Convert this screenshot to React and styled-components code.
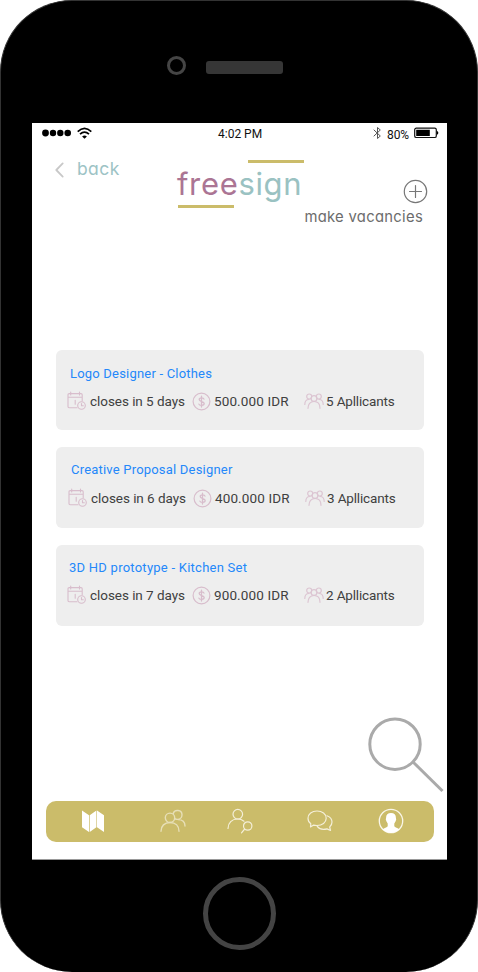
import React from "react";
import styled, { createGlobalStyle } from "styled-components";

const GlobalStyle = createGlobalStyle`
  * { box-sizing: border-box; }
  html, body { margin: 0; background: #fff; }
  svg { display: block; flex: none; }
  button { border: 0; padding: 0; background: none; font: inherit; cursor: pointer; }
`;

const Phone = styled.div`
  width: 478px;
  height: 972px;
  display: flex;
  flex-direction: column;
  background: #000;
  border: 1px solid #333;
  border-width: 1px 1px 0;
  border-radius: 72px;
  font-family: Roboto, "Liberation Sans", sans-serif;
  overflow: hidden;
`;
const TopBezel = styled.div`
  height: 122px;
  display: flex;
  align-items: flex-start;
  padding: 55px 0 0 166px;
  gap: 20px;
`;
const Camera = styled.div`
  width: 19px;
  height: 19px;
  border: 3px solid #454545;
  border-radius: 50%;
`;
const Speaker = styled.div`
  width: 77px;
  height: 13px;
  margin-top: 4.5px;
  background: #363636;
  border-radius: 3px;
`;
const Screen = styled.main`
  width: 415px;
  height: 737px;
  margin-left: 31px;
  display: flex;
  flex-direction: column;
  background: #fff;
  border-bottom: 1px solid #999;
`;
const BottomBezel = styled.div`
  flex: 1;
  display: flex;
  justify-content: center;
  padding-top: 17px;
`;
const HomeButton = styled.button`
  width: 73px;
  height: 73px;
  border: 5px solid #444;
  border-radius: 50%;
`;

const StatusBar = styled.div`
  height: 22px;
  display: grid;
  grid-template-columns: 176px 1fr auto;
  padding: 0 8px 0 10px;
  font-size: 12px;
  line-height: 22px;
  color: #111;
`;
const Signal = styled.div`
  display: flex;
  padding-top: 4px;
  gap: 6px;
`;
const Time = styled.span`
  white-space: nowrap;
`;
const Power = styled.div`
  display: flex;
  gap: 5px;
  padding-top: 1px;
  svg { margin-top: 2px; }
`;
const Percent = styled.span`
  width: 22px;
  letter-spacing: -0.1px;
`;

const Header = styled.header`
  height: 205px;
  display: grid;
  grid-template-columns: 122px 126px 1fr;
  padding: 15px 24px 0 24px;
  font-family: Inter, Lato, sans-serif;
  font-feature-settings: "cv11" 1;
`;
const Back = styled.button`
  height: 20px;
  margin-top: -1px;
  display: flex;
  align-items: center;
  gap: 13px;
  font-size: 17.5px;
  line-height: 20px;
  letter-spacing: 0.4px;
  color: #9dc3c5;
  svg { margin: 2px 0 0 -1px; }
`;
const Logo = styled.div`
  height: 48px;
  display: flex;
  flex-direction: column;
`;
const Bar = styled.div`
  width: 56px;
  height: 3px;
  background: #cbbc6a;
  align-self: ${(p) => (p.$end ? "flex-end" : "flex-start")};
`;
const Wordmark = styled.div`
  height: 42px;
  line-height: 42px;
  font-size: 31px;
  letter-spacing: 0.65px;
  text-indent: -1px;
  white-space: nowrap;
  color: #9ac2c2;
`;
const Free = styled.span`
  color: #ab7594;
`;
const Make = styled.button`
  display: flex;
  flex-direction: column;
  align-items: flex-end;
  height: 72px;
  padding-top: 19px;
  white-space: nowrap;
  font-size: 14.8px;
  letter-spacing: 0.3px;
  line-height: 22px;
  color: #6c6c6c;
  svg { margin: 0 -5px 2px 0; }
`;

const Cards = styled.section`
  height: 276px;
  display: flex;
  flex-direction: column;
  justify-content: space-between;
  padding: 0 23px 0 24px;
`;
const Card = styled.article`
  height: ${(p) => p.$height}px;
  padding: ${(p) => p.$top}px 0 0 ${(p) => 11 + p.$shift}px;
  background: #eee;
  border-radius: 6px;
`;
const Title = styled.h2`
  margin: 0 0 0 ${(p) => p.$indent}px;
  height: 18px;
  line-height: 18px;
  font-size: 13px;
  font-weight: 400;
  letter-spacing: ${(p) => p.$spacing}px;
  color: #2488fa;
`;
const Facts = styled.div`
  display: grid;
  grid-template-columns: 125px 112px 1fr;
  margin-top: ${(p) => p.$gap}px;
  height: 20px;
`;
const Fact = styled.div`
  display: flex;
  align-items: center;
  gap: ${(p) => p.$gap}px;
  color: #404040;
  font-size: 13.5px;
  line-height: 20px;
  white-space: nowrap;
  letter-spacing: ${(p) => p.$spacing}px;
`;

const SearchButton = styled.button`
  width: 78px;
  height: 77px;
  margin: 91px 2px 0 auto;
`;
const Nav = styled.nav`
  height: 41px;
  margin: 7px 13px 0 14px;
  padding-bottom: 1px;
  display: grid;
  grid-template-columns: 93px 67px 67px 93px 50px;
  align-items: center;
  background: #cbbc6a;
  border-radius: 10px;
`;
const NavItem = styled.button`
  display: flex;
  justify-content: center;
`;

const stroke = { fill: "none", strokeLinecap: "round", strokeLinejoin: "round" };

const SignalIcon = () => (
  <svg width="29" height="12" viewBox="0 0 29 12" fill="#000">
    <circle cx="3.5" cy="6" r="3.4" /><circle cx="11" cy="6" r="3.2" />
    <circle cx="18.3" cy="6" r="3.2" /><circle cx="25.7" cy="6" r="3.3" />
  </svg>
);
const WifiIcon = () => (
  <svg width="15" height="13" viewBox="0 0 15 13" {...stroke} strokeLinecap="butt" stroke="#000" strokeWidth="1.7">
    <path d="M.7 4.7Q7.5-1.9 14.3 4.7M3 7.2q4.5-4.2 9 0" />
    <path d="M5.1 9.4q2.4-2 4.8 0L7.5 11.8z" fill="#000" stroke="none" />
  </svg>
);
const BluetoothIcon = () => (
  <svg width="9" height="14" viewBox="0 0 9 14" {...stroke} stroke="#555">
    <path d="M1 4l6.3 6L4.5 12.5v-11L7.3 4 1 10" />
  </svg>
);
const BatteryIcon = () => (
  <svg width="25" height="14" viewBox="0 0 25 14">
    <rect x=".7" y="2.2" width="21.6" height="9.3" rx="1.6" fill="none" stroke="#111" strokeWidth="1.2" />
    <path d="M2.2 3.8h13.6v6.2H2.2zM22.8 5c2 .4 2 3.4 0 3.8z" fill="#000" />
  </svg>
);
const BackIcon = () => (
  <svg width="9" height="16" viewBox="0 0 9 16" {...stroke} stroke="#c8c8c8" strokeWidth="1.8">
    <path d="M7.7 1.4L1.3 8l6.4 6.6" />
  </svg>
);
const PlusIcon = () => (
  <svg width="25" height="25" viewBox="0 0 25 25" {...stroke} stroke="#777" strokeWidth="1.2">
    <circle cx="12.5" cy="12.5" r="11.2" /><path d="M12.5 6.5v12M6.5 12.5h12" />
  </svg>
);
const CalendarIcon = () => (
  <svg width="19" height="20" viewBox="0 0 19 20" {...stroke} stroke="#d8bdcc" strokeWidth="1.1">
    <path d="M10 16.7H2.2Q1 16.7 1 15.5V3.8Q1 2.6 2.2 2.6H14q1.2 0 1.2 1.2v6M1 6.2h14.2M3.7 1v3M12.5 1v3M8.2 9.2v4" />
    <circle cx="14.5" cy="14.5" r="3.8" /><path d="M14.5 12.5v2.2h1.8" />
  </svg>
);
const CoinIcon = () => (
  <svg width="19" height="20" viewBox="0 0 19 20" {...stroke} stroke="#d8bdcc" strokeWidth="1.2">
    <circle cx="9.5" cy="10.5" r="8.4" />
    <path d="M12 8.1C11.5 6.5 7.2 6.5 7.2 8.6c0 2.5 5 1.4 5 4 0 2.4-4.7 2.4-5.3.5M9.5 5.2v10.8" strokeWidth="1.3" />
  </svg>
);
const GroupIcon = () => (
  <svg width="20" height="20" viewBox="0 0 20 20" {...stroke} stroke="#dcc5d2" strokeWidth="1.2">
    <circle cx="5.2" cy="5.5" r="2.5" /><circle cx="10" cy="7.5" r="2.9" /><circle cx="14.8" cy="5.5" r="2.5" />
    <path d="M.8 13.5c0-3 1.6-5 4.2-5M19.2 13.5c0-3-1.6-5-4.2-5M4 17.3c0-4 2.2-6.8 6-6.8s6 2.8 6 6.8" />
  </svg>
);
const SearchIcon = () => (
  <svg width="78" height="77" viewBox="0 0 78 77" fill="none" stroke="#aaa" strokeWidth="3">
    <circle cx="28" cy="27.2" r="25.2" /><path d="M46 45l29.5 29" />
  </svg>
);
const MapIcon = () => (
  <svg width="24" height="24" viewBox="0 0 24 24" fill="#fff">
    <path d="M1 1.5l7 4.7V23L1 18.3zM8.7 6.2L15.4 1.5v16.8L8.7 23zM16 1.5L23 6.2V23l-7-4.7z" />
  </svg>
);
const PeopleIcon = () => (
  <svg width="26" height="24" viewBox="0 0 26 24" {...stroke} stroke="#e7dfb7" strokeWidth="1.4">
    <circle cx="10" cy="8.8" r="4.7" /><path d="M1 22.3c0-5.4 3.6-8.8 9-8.8s9 3.4 9 8.8" />
    <path d="M13.2 4.5C14.4 0 22 .7 22 5.8c0 2.7-2 4.6-4.5 4.6-1 0-2-.3-2.7-.8M18 10.6c4.4 0 7 2.3 7 6.4" />
  </svg>
);
const FindPersonIcon = () => (
  <svg width="26" height="26" viewBox="0 0 26 26" {...stroke} stroke="#f4efd9" strokeWidth="1.2">
    <circle cx="10.8" cy="6.2" r="4.8" /><path d="M1 20.5c0-5.7 4-9.5 9.5-9.5 2.7 0 4.8.8 6.5 2.2" />
    <circle cx="20.7" cy="18" r="4.2" /><path d="M17.7 21L14.5 24.8" />
  </svg>
);
const ChatIcon = () => (
  <svg width="26" height="22" viewBox="0 0 26 22" {...stroke} stroke="#f4efd9" strokeWidth="1.2">
    <path d="M10 1C5 1 1 4 1 8.3c0 2.3 1 4.2 2.8 5.5L3.5 17l3.1-1.9c1 .3 2.1.4 3.4.4 5.2 0 9.2-3 9.2-7.2S15.2 1 10 1z" />
    <path d="M20 5.8c3 1.2 5 3.6 5 6.3 0 2-.8 3.7-2.3 4.9l.8 3.5-3.5-1.6c-3.8 1-7.9-.1-9.8-2.5" />
  </svg>
);
const ProfileIcon = () => (
  <svg width="26" height="26" viewBox="0 0 26 26">
    <circle cx="13" cy="13" r="11.7" fill="none" stroke="#f9f6e8" strokeWidth="1.3" />
    <path d="M13 5c3.2 0 5 1.8 4.9 4.8l.3 1.6-.7 2-1.2 2.2v2.7c.4 1.2 3.7 1.8 5.2 3.3-5 4.4-12 4.400-17 0 1.500-1.500 4.800-2.100 5.200-3.300v-2.700l-1.200-2.200-.7-2 .3-1.600C8 6.800 9.800 5 13 5z" fill="#fff" />
  </svg>
);

const vacancies = [
  { title: "Logo Designer - Clothes", days: 5, pay: "500.000", applicants: 5, shift: 0, indent: 3, spacing: 0.2, height: 80, top: 15, gap: 8 },
  { title: "Creative Proposal Designer", days: 6, pay: "400.000", applicants: 3, shift: 1, indent: 3, spacing: 0.2, height: 81, top: 14, gap: 9 },
  { title: "3D HD prototype - Kitchen Set", days: 7, pay: "900.000", applicants: 2, shift: 0, indent: 2, spacing: 0.25, height: 81, top: 14, gap: 8 },
];

function Vacancy({ item }) {
  return (
    <Card $height={item.height} $shift={item.shift} $top={item.top}>
      <Title $indent={item.indent} $spacing={item.spacing}>{item.title}</Title>
      <Facts $gap={item.gap}>
        <Fact $gap={4} $spacing={-0.05}><CalendarIcon />closes in {item.days} days</Fact>
        <Fact $gap={3} $spacing={0.12}><CoinIcon />{item.pay} IDR</Fact>
        <Fact $gap={2} $spacing={-0.15}><GroupIcon />{item.applicants} Apllicants</Fact>
      </Facts>
    </Card>
  );
}

export default function App() {
  return (
    <>
      <GlobalStyle />
      <Phone>
        <TopBezel><Camera /><Speaker /></TopBezel>
        <Screen>
          <StatusBar>
            <Signal><SignalIcon /><WifiIcon /></Signal>
            <Time>4:02 PM</Time>
            <Power><BluetoothIcon /><Percent>80%</Percent><BatteryIcon /></Power>
          </StatusBar>
          <Header>
            <Back><BackIcon />back</Back>
            <Logo>
              <Bar $end />
              <Wordmark><Free>free</Free>sign</Wordmark>
              <Bar />
            </Logo>
            <Make><PlusIcon />make vacancies</Make>
          </Header>
          <Cards>{vacancies.map((v) => <Vacancy key={v.title} item={v} />)}</Cards>
          <SearchButton aria-label="Search"><SearchIcon /></SearchButton>
          <Nav>
            <NavItem aria-label="Map"><MapIcon /></NavItem>
            <NavItem aria-label="People"><PeopleIcon /></NavItem>
            <NavItem aria-label="Find people"><FindPersonIcon /></NavItem>
            <NavItem aria-label="Messages"><ChatIcon /></NavItem>
            <NavItem aria-label="Profile"><ProfileIcon /></NavItem>
          </Nav>
        </Screen>
        <BottomBezel><HomeButton aria-label="Home" /></BottomBezel>
      </Phone>
    </>
  );
}
